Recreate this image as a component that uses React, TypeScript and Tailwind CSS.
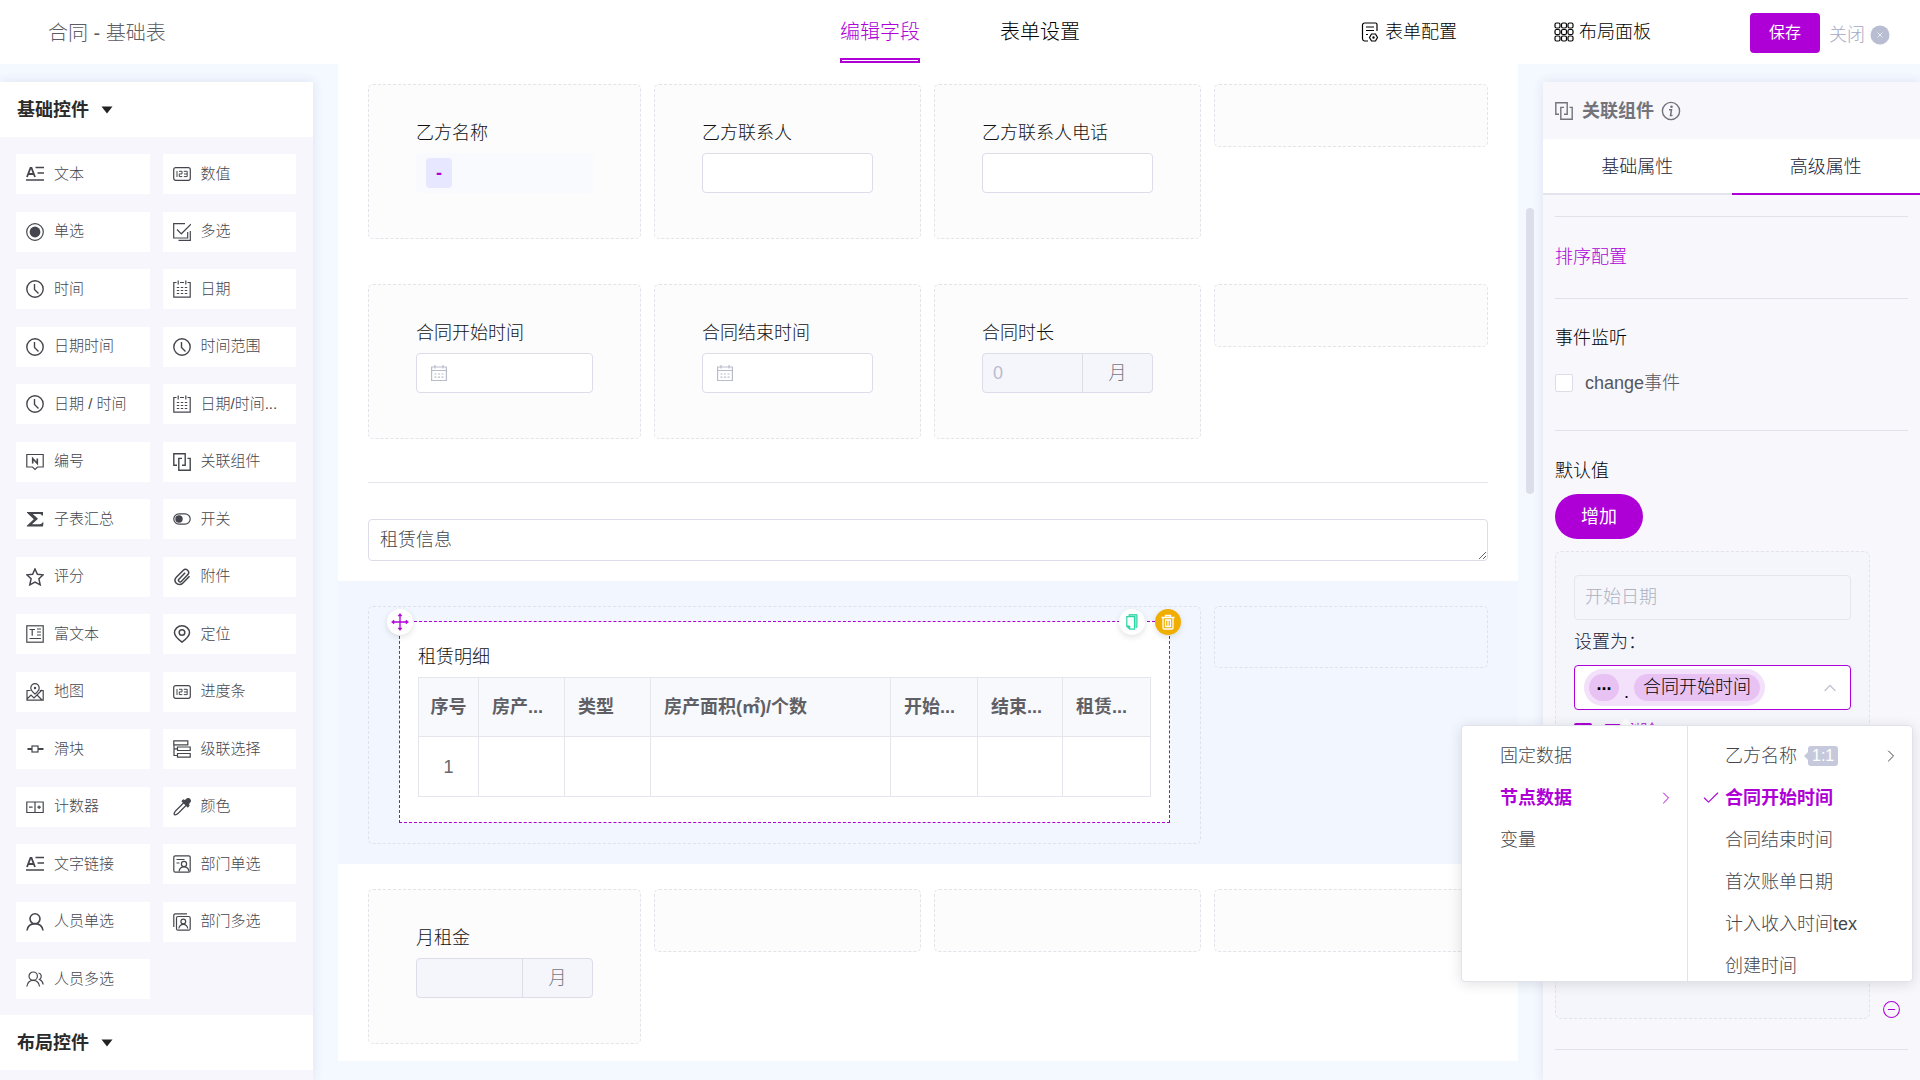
import * as React from "react";
import { Check, ChevronRight, ChevronUp, CircleMinus } from "lucide-react";

const icons: Record<string, React.ReactNode> = {
  text: (
    <>
      <path d="M1 12L4.5 3h1L9 12M2.5 9h5" strokeWidth="1.8" />
      <path d="M9.5 2.5H18M11.5 8H18M0 15h18" strokeWidth="1.5" />
    </>
  ),
  number: (
    <>
      <rect x="0.7" y="2.7" width="16.6" height="12.6" rx="2" />
      <path d="M4 6v6M6 6.3h3v2.6H6.3v2.7h3M10.8 6.3h3.4v5.3h-3.4M11 9h3" strokeWidth="1" />
    </>
  ),
  radio: (
    <>
      <circle cx="9" cy="9" r="8.3" />
      <circle cx="9" cy="9" r="5.4" fill="currentColor" stroke="none" />
    </>
  ),
  checkbox: (
    <>
      <path d="M12 0.7H0.7V15h14V9" />
      <path d="M4 6.5l4.3 4.3L18 1.2" />
      <path d="M17.3 8v9.3H5.5" />
    </>
  ),
  clock: (
    <>
      <circle cx="9" cy="9" r="8.2" strokeWidth="1.4" />
      <path d="M8.5 4v5.5l4 4" strokeWidth="1.4" />
    </>
  ),
  date: (
    <>
      <path d="M3.5 2.5H.8v14.7h16.4V2.5h-2.7M7 2.5h4M5.2 0.5v4M12.8 0.5v4" />
      <path d="M3.8 7.5h2.4M7.8 7.5h2.4M11.8 7.5h2.4M3.8 10.5h2.4M7.8 10.5h2.4M11.8 10.5h2.4M3.8 13.5h2.4M7.8 13.5h2.4M11.8 13.5h2.4" />
    </>
  ),
  serial: (
    <>
      <path d="M.8 1.5h16.4V14H11.5L9 16.5 6.5 14H.8z" />
      <path d="M6.7 10.5v-5l4.6 5v-5" strokeWidth="1.6" />
    </>
  ),
  relation: (
    <path d="M4 12.2H.8V.8h11.4v11.4H9M9 5.400H5.800v11.800h11.400V5.400H14.500" strokeWidth="1.400" />
  ),
  sum: (
    <path d="M1 2h16v3.500h-1.200c-.4-1-1-1.500-2.300-1.500H6.800L12 8.800 6 14.200h7.800c1.400 0 2-.6 2.500-1.700H17.500L17 16.500H.8v-.8L7.800 9.300 1 2.800z" fill="currentColor" stroke="none" />
  ),
  toggle: (
    <>
      <rect x="0.8" y="3.8" width="16.4" height="10.4" rx="5.2" />
      <circle cx="6" cy="9" r="3.7" fill="currentColor" stroke="none" />
    </>
  ),
  star: <path d="M9 1l2.4 5.2 5.8.6-4.3 4 1.3 6L9 14l-5.2 2.8 1.3-6-4.3-4 5.8-.6z" strokeWidth="1.5" />,
  clip: (
    <path
      d="M16.5 8.2l-6.8 7a4.4 4.4 0 0 1-6.6-.2 4.4 4.4 0 0 1 .2-5.8l7-7a3.2 3.2 0 0 1 4.6 4.4l-6.6 6.8a1.6 1.6 0 0 1-2.4-2.2l6.2-6.4"
      strokeWidth="1.5"
    />
  ),
  rich: (
    <>
      <rect x="0.8" y="0.8" width="16.4" height="16.4" />
      <path d="M3.5 4.5h5.5M6.2 4.5v6.2M11 4h4M11 7h4M11 10h4M3.5 13.5h11.5" />
    </>
  ),
  pin: (
    <>
      <path d="M9 17.2C5 14.2 1.5 11.5 1.5 7.8a7.5 7 0 0 1 15 0c0 3.700-3.500 6.400-7.500 9.400z" strokeWidth="1.5" />
      <circle cx="9" cy="7.5" r="2.8" strokeWidth="1.5" />
    </>
  ),
  map: (
    <>
      <path d="M4.500 7.500H1v9.700h16.200V7.500h-3.500M1 16l4-4 3 3 8-8M11 12l5 5" />
      <path d="M9 11C6.500 8.800 4.800 7 4.800 4.900a4.200 4.200 0 0 1 8.400 0C13.200 7 11.500 8.800 9 11z" />
      <circle cx="9" cy="5" r="1.200" fill="currentColor" stroke="none" />
    </>
  ),
  slider: (
    <>
      <rect x="6" y="6" width="6" height="6" />
      <path d="M1.500 9H6M12 9h5.500" strokeWidth="1.800" />
    </>
  ),
  cascade: (
    <path d="M.8.8h14v4H.8zM4.500 7h12.700v3.500H4.500zM4.500 13.500h12.700v3.700H4.500zM1 5v10.500h3.500M1 8.800h3.500" />
  ),
  counter: <path d="M.8 4h16.400v10.500H.8zM9 4v10.500M3 9.200h3.600M11.300 9.200h3.600M13.100 7.400V11" />,
  picker: (
    <>
      <path d="M11 4.500L2.500 13c-1 1-1.500 2.500-1.200 3.700 1.200.3 2.700-.2 3.700-1.200L13.500 7" />
      <path d="M9.200 3.200l1.200-1.200 1.600.8L14 .9a2.200 2.200 0 0 1 3 3L15.200 6l.8 1.500-1.200 1.300z" fill="currentColor" />
    </>
  ),
  deptOne: (
    <>
      <path d="M5 17.200H2.300A1.500 1.500 0 0 1 .8 15.700V2.300A1.500 1.500 0 0 1 2.300.8h13.400a1.500 1.500 0 0 1 1.500 1.500v13.400a1.500 1.500 0 0 1-1.500 1.500H5M3.500 4.500h8M3.500 8h3" />
      <circle cx="11" cy="9" r="2.600" />
      <path d="M6 16.500c.5-3 2.500-4.600 5-4.600s4.500 1.600 5 4.600" />
    </>
  ),
  deptMany: (
    <>
      <path d="M.8 14V2.300A1.500 1.500 0 0 1 2.300.8H14" />
      <rect x="3.500" y="3.500" width="13.700" height="13.700" rx="1.500" />
      <circle cx="10.300" cy="8.500" r="2.400" />
      <path d="M5.800 15.500c.5-2.700 2.300-4.200 4.500-4.200s4 1.500 4.500 4.200" />
    </>
  ),
  person: (
    <>
      <circle cx="9" cy="5.800" r="5" strokeWidth="1.600" />
      <path d="M1 17.500c.7-4.500 3.500-6.900 8-6.900s7.300 2.400 8 6.900" strokeWidth="1.600" />
    </>
  ),
  people: (
    <>
      <circle cx="7.200" cy="6.200" r="4.200" />
      <path d="M.8 16.500c.6-4 3-6.100 6.400-6.100s5.800 2.100 6.400 6.100M12.500 3c3 .5 4 4.500 1 6.500 2.200.9 3.300 2.500 3.700 5" />
    </>
  ),
};

interface IIconProps {
  name: string;
}

const Icon: React.FunctionComponent<IIconProps> = ({ name }) => (
  <svg
    viewBox="0 0 18 18"
    fill="none"
    stroke="currentColor"
    strokeWidth="1.2"
    className="w-[18px] h-[18px] shrink-0"
    aria-hidden="true"
  >
    {icons[name]}
  </svg>
);

const widgets = [
  { icon: "text", label: "文本" },
  { icon: "number", label: "数值" },
  { icon: "radio", label: "单选" },
  { icon: "checkbox", label: "多选" },
  { icon: "clock", label: "时间" },
  { icon: "date", label: "日期" },
  { icon: "clock", label: "日期时间" },
  { icon: "clock", label: "时间范围" },
  { icon: "clock", label: "日期 / 时间" },
  { icon: "date", label: "日期/时间..." },
  { icon: "serial", label: "编号" },
  { icon: "relation", label: "关联组件" },
  { icon: "sum", label: "子表汇总" },
  { icon: "toggle", label: "开关" },
  { icon: "star", label: "评分" },
  { icon: "clip", label: "附件" },
  { icon: "rich", label: "富文本" },
  { icon: "pin", label: "定位" },
  { icon: "map", label: "地图" },
  { icon: "number", label: "进度条" },
  { icon: "slider", label: "滑块" },
  { icon: "cascade", label: "级联选择" },
  { icon: "counter", label: "计数器" },
  { icon: "picker", label: "颜色" },
  { icon: "text", label: "文字链接" },
  { icon: "deptOne", label: "部门单选" },
  { icon: "person", label: "人员单选" },
  { icon: "deptMany", label: "部门多选" },
  { icon: "people", label: "人员多选" },
];

const Header = () => (
  <header className="grid grid-cols-[1fr_auto_1fr] h-16 shrink-0 bg-white">
    <h1 className="pl-12 pt-[18px] text-xl leading-[30px] text-[#5c5c64]">合同 - 基础表</h1>
    <nav className="flex gap-20 text-xl">
      <a href="#fields" className="flex flex-col pt-[17px] text-[#ae00d6]">
        <span className="leading-[30px]">编辑字段</span>
        <span className="mt-[11px] h-[5px] border-2 border-[#ae00d6]" />
      </a>
      <a href="#settings" className="pt-[17px] leading-[30px] text-black">
        表单设置
      </a>
    </nav>
    <div className="flex items-start justify-end pr-[30px] text-lg text-black">
      <button className="mt-4 mr-[97px] flex items-center gap-[6px] leading-8">
        <svg viewBox="0 0 18 20" fill="none" stroke="currentColor" strokeWidth="1.2" className="w-[18px] h-5">
          <path d="M7 19H3.500A2.500 2.500 0 0 1 1.500 17V3a2 2 0 0 1 2-2h11a1.500 1.500 0 0 1 1.500 1.500V9M5 5h8M5 8.500h8M5 12.500h2" />
          <path d="M10.500 12h4l2 3.500-2 3.500h-4l-2-3.500z" />
          <circle cx="12.500" cy="15.500" r="0.600" />
        </svg>
        表单配置
      </button>
      <button className="mt-4 mr-[99px] flex items-center gap-[5px] leading-8">
        <svg viewBox="0 0 20 20" fill="none" stroke="currentColor" strokeWidth="1.200" className="w-5 h-5">
          {[1, 7.500, 14].map((y) =>
            [1, 7.500, 14].map((x) => <rect key={`${x}-${y}`} x={x} y={y} width="5" height="5" rx="1.500" />)
          )}
        </svg>
        布局面板
      </button>
      <button className="mt-[13px] w-[70px] h-10 rounded bg-[#ae00d6] text-base font-normal text-white">保存</button>
      <button className="mt-[19px] ml-[9px] flex items-center gap-[5px] leading-8 text-[#a4a9c4]">
        关闭
        <svg viewBox="0 0 20 20" className="w-5 h-5">
          <circle cx="10" cy="10" r="9.500" fill="#b9bdd2" />
          <path d="M7.500 7.500l5 5M12.500 7.500l-5 5" stroke="#e8eaf4" strokeWidth="1" />
        </svg>
      </button>
    </div>
  </header>
);

const SectionTitle = ({ title }: { title: string }) => (
  <button className="flex items-center gap-3 h-[55px] w-full shrink-0 bg-white pl-[17px] text-lg font-bold text-[#2b2b2b]">
    {title}
    <svg viewBox="0 0 12 8" className="w-3 h-2" fill="#222">
      <path d="M0.500 0.500h11L6 7.500z" />
    </svg>
  </button>
);

const WidgetPanel = () => (
  <aside className="mt-[18px] mr-[25px] pb-[10px] w-[313px] shrink-0 flex flex-col bg-[#f6f6fc] shadow-[0_0_10px_rgba(60,70,130,0.12)]">
    <SectionTitle title="基础控件" />
    <div className="flex-1 grid grid-cols-2 gap-x-[13px] content-between pt-[17px] pb-4 pl-4 pr-[17px]">
      {widgets.map((item, index) => (
        <button
          key={index}
          className="flex items-center gap-[10px] h-10 pl-[10px] bg-white text-[15px] text-[#45464d] text-left whitespace-nowrap"
        >
          <Icon name={item.icon} />
          {item.label}
        </button>
      ))}
    </div>
    <SectionTitle title="布局控件" />
  </aside>
);

const rowClass =
  "grid grid-cols-[minmax(0,273fr)_minmax(0,267fr)_minmax(0,267fr)_minmax(0,274fr)] gap-x-[13px] items-start px-[30px]";

const Cell = ({ children }: { children: React.ReactNode }) => (
  <div className="h-[155px] rounded-[5px] border border-dashed border-[#e3e4ea] bg-[#fcfcfc] px-[47px] pt-7">
    {children}
  </div>
);

const EmptyCell = () => <div className="h-[63px] rounded-[5px] border border-dashed border-[#e3e4ea] bg-[#fcfcfc]" />;

const labelClass = "block text-lg leading-10 text-[#111]";
const inputClass = "block w-full h-10 rounded border border-[#dcdde8] bg-white px-[10px] text-lg";

const DateField = ({ id, label }: { id: string; label: string }) => (
  <Cell>
    <label htmlFor={id} className={labelClass}>
      {label}
    </label>
    <div className="flex items-center h-10 rounded border border-[#dcdde8] bg-white pl-[13px]">
      <svg viewBox="0 0 18 18" fill="none" stroke="#b9bccb" strokeWidth="1.200" className="w-[18px] h-[18px] shrink-0">
        <path d="M1.600 3h14.800v13.500H1.600zM1.600 6.500h14.800M5 1v3.500M13 1v3.500M4.500 10h2M8 10h2M11.500 10h2M4.500 13.200h2M8 13.200h2M11.500 13.200h2" />
      </svg>
      <input id={id} className="flex-1 min-w-0 h-full px-2 text-lg outline-none" />
    </div>
  </Cell>
);

const MonthField = ({ id, label, value }: { id: string; label: string; value: string }) => (
  <Cell>
    <label htmlFor={id} className={labelClass}>
      {label}
    </label>
    <div className="flex h-10 rounded border border-[#dcdde8] bg-[#f5f6fc] text-lg">
      <input id={id} disabled defaultValue={value} className="flex-1 min-w-0 px-[10px] text-[#b9bccb]" />
      <span className="w-[70px] border-l border-[#dcdde8] text-center leading-[38px] text-[#75777f]">月</span>
    </div>
  </Cell>
);

const columns = [
  { title: "序号", width: "w-[60px]" },
  { title: "房产...", width: "w-[86px]" },
  { title: "类型", width: "w-[86px]" },
  { title: "房产面积(㎡)/个数", width: "w-[240px]" },
  { title: "开始...", width: "w-[87px]" },
  { title: "结束...", width: "w-[85px]" },
  { title: "租赁...", width: "w-[88px]" },
];

const DetailTable = () => (
  <table className="w-full table-fixed border-collapse text-lg">
    <thead>
      <tr className="h-[59px] bg-[#f8f9fc]">
        {columns.map((col, index) => (
          <th
            key={col.title}
            className={`${col.width} border border-[#e5e6eb] font-bold text-[#5f6066] whitespace-nowrap ${
              index === 0 ? "text-center" : "pl-[13px] text-left"
            }`}
          >
            {col.title}
          </th>
        ))}
      </tr>
    </thead>
    <tbody>
      <tr className="h-[60px]">
        {columns.map((col, index) => (
          <td key={col.title} className="border border-[#e5e6eb] text-center text-[#66676d]">
            {index === 0 ? "1" : ""}
          </td>
        ))}
      </tr>
    </tbody>
  </table>
);

const roundButton = "absolute flex items-center justify-center w-[26px] h-[26px] rounded-full shadow-[0_2px_6px_rgba(0,0,0,0.12)]";

const SelectedBlock = () => (
  <div className="col-span-3 rounded-[5px] border border-dashed border-[#e0e2ea] px-[30px] pt-[14px] pb-5">
    <div className="relative border border-dashed border-[#ae00d6] bg-white px-[18px] pt-[15px] pb-[25px]">
      <h2 className={labelClass}>租赁明细</h2>
      <DetailTable />
      <button aria-label="移动" className={`${roundButton} -left-[13px] -top-[13px] bg-white text-[#ae00d6]`}>
        <svg viewBox="0 0 18 18" className="w-[18px] h-[18px]" stroke="currentColor" fill="currentColor">
          <path d="M9 2v14M2 9h14" strokeWidth="1.300" />
          <path d="M9 0.500l2 2.500H7zM9 17.500l2-2.500H7zM0.500 9L3 7v4zM17.500 9L15 7v4z" strokeWidth="0.500" />
        </svg>
      </button>
      <button aria-label="复制" className={`${roundButton} right-6 -top-[13px] bg-white text-[#2ad4a4]`}>
        <svg viewBox="0 0 12 16" className="w-3 h-4" stroke="currentColor" fill="none">
          <path d="M3 2V.7h8v12.600H9.500" fill="#8deacd" />
          <path d="M.8 2.700h7.700v12.500H3.800L.8 12.200z" fill="#fff" strokeWidth="1.200" />
          <path d="M.8 12h3v3z" fill="currentColor" />
        </svg>
      </button>
      <button aria-label="删除" className={`${roundButton} -right-3 -top-[13px] bg-[#f0ae00] text-white`}>
        <svg viewBox="0 0 14 16" className="w-[14px] h-4" stroke="currentColor" fill="none" strokeWidth="1.300">
          <path d="M.5 3.500h13M4.500 3.300V1.500h5v1.800M2 3.500v10.300a1.200 1.200 0 0 0 1.200 1.200h7.600a1.200 1.200 0 0 0 1.200-1.200V3.500M4.500 6h5v6.500h-5zM7 6v6.500" />
        </svg>
      </button>
    </div>
  </div>
);

const Canvas = () => (
  <main className="flex-1 min-w-0 overflow-hidden">
    <div className="bg-white pt-5">
      <div className={`${rowClass} pb-5`}>
        <Cell>
          <span className={labelClass}>乙方名称</span>
          <div className="h-10 rounded bg-[#f9fafd] pl-[10px] pt-[5px]">
            <span className="flex items-center justify-center w-[26px] h-[30px] rounded bg-[#e7e8ff] text-lg font-bold text-[#ae00d6]">
              -
            </span>
          </div>
        </Cell>
        <Cell>
          <label htmlFor="contact" className={labelClass}>
            乙方联系人
          </label>
          <input id="contact" className={inputClass} />
        </Cell>
        <Cell>
          <label htmlFor="phone" className={labelClass}>
            乙方联系人电话
          </label>
          <input id="phone" className={inputClass} />
        </Cell>
        <EmptyCell />
      </div>
      <div className={`${rowClass} pt-[25px] pb-5`}>
        <DateField id="start" label="合同开始时间" />
        <DateField id="end" label="合同结束时间" />
        <MonthField id="duration" label="合同时长" value="0" />
        <EmptyCell />
      </div>
      <div className="px-[30px] pt-[23px] pb-5">
        <hr className="border-[#e3e4e9]" />
        <textarea
          aria-label="租赁信息"
          defaultValue="租赁信息"
          className="block mt-9 w-full h-[42px] rounded border border-[#dcdde8] px-[11px] pt-[5px] text-lg leading-[30px] text-[#45464d]"
        />
      </div>
      <div className={`${rowClass} bg-[#f2f6ff] pt-[25px] pb-5`}>
        <SelectedBlock />
        <div className="h-[62px] rounded-[5px] border border-dashed border-[#e0e2ea]" />
      </div>
      <div className={`${rowClass} pt-[25px] pb-[17px]`}>
        <MonthField id="rent" label="月租金" value="" />
        <EmptyCell />
        <EmptyCell />
        <EmptyCell />
      </div>
    </div>
  </main>
);

const nodeFields = ["合同结束时间", "首次账单日期", "计入收入时间tex", "创建时间"];

const CascadeMenu = () => (
  <div className="absolute z-10 top-[60px] -right-[62px] w-[452px]">
    <span className="absolute left-[159px] -top-1 w-3 h-3 rotate-45 bg-white" />
    <div className="relative flex h-[257px] overflow-hidden rounded border border-[#e1e3ec] bg-white shadow-[0_2px_14px_rgba(0,0,0,0.12)] text-lg text-[#45464d]">
      <ul className="w-[226px] shrink-0 border-r border-[#e1e3ec] pt-[9px] leading-[42px]">
        <li className="pl-[38px]">固定数据</li>
        <li className="flex items-center justify-between pl-[38px] pr-[11px] font-bold text-[#ae00d6]">
          节点数据
          <ChevronRight className="w-5 h-5" strokeWidth={1.200} />
        </li>
        <li className="pl-[38px]">变量</li>
      </ul>
      <ul className="flex-1 pt-[9px] leading-[42px]">
        <li className="flex items-center pl-[37px] pr-[11px]">
          乙方名称
          <span className="ml-[7px] flex items-center">
            <span className="border-y-4 border-r-4 border-y-transparent border-r-[#c6c9dc]" />
            <span className="h-5 rounded-[3px] bg-[#c6c9dc] px-1 text-base leading-5 text-white">1:1</span>
          </span>
          <ChevronRight className="ml-auto w-5 h-5" strokeWidth={1.200} />
        </li>
        <li className="flex items-center gap-1 pl-[13px] font-bold text-[#ae00d6]">
          <Check className="w-5 h-5" strokeWidth={1.300} />
          合同开始时间
        </li>
        {nodeFields.map((field) => (
          <li key={field} className="pl-[37px]">
            {field}
          </li>
        ))}
      </ul>
    </div>
  </div>
);

const PropertyPanel = () => (
  <aside className="mt-[18px] w-[377px] shrink-0 bg-[#f7f7fc] text-lg shadow-[0_0_10px_rgba(60,70,130,0.12)]">
    <div className="flex items-center h-[57px] pl-3 text-[#73737a]">
      <Icon name="relation" />
      <h2 className="ml-[9px] font-bold">关联组件</h2>
      <svg viewBox="0 0 20 20" fill="none" stroke="currentColor" className="ml-[7px] w-5 h-5">
        <circle cx="10" cy="10" r="8.600" strokeWidth="1.400" />
        <circle cx="10.500" cy="5.700" r="1.300" fill="currentColor" stroke="none" />
        <path d="M8 8.800h2.500L9.500 14.500h2" strokeWidth="1.500" />
      </svg>
    </div>
    <div className="grid grid-cols-2 h-14 bg-white text-[#1b2338]">
      <button className="border-b-2 border-[#e4e4ee] pt-[2px]">基础属性</button>
      <button className="border-b-2 border-[#ae00d6] pt-[2px]">高级属性</button>
    </div>
    <div className="px-3 pt-[21px] text-black">
      <hr className="border-[#e1e2e9]" />
      <a href="#sort" className="block py-[25px] leading-[31px] text-[#ae00d6]">
        排序配置
      </a>
      <hr className="border-[#e1e2e9]" />
      <h3 className="pt-6 leading-[30px]">事件监听</h3>
      <label className="mt-[15px] mb-8 flex items-center gap-3 leading-[30px] text-[#55565c]">
        <input type="checkbox" className="appearance-none w-[18px] h-[18px] rounded-[2px] border border-[#dcdde8] bg-white" />
        change事件
      </label>
      <hr className="border-[#e1e2e9]" />
      <h3 className="pt-[25px] leading-[30px]">默认值</h3>
      <button className="mt-2 w-[88px] h-[45px] rounded-full bg-[#ae00d6] font-normal text-white">增加</button>
      <div className="mt-3 flex items-end">
        <div className="w-[315px] h-[468px] rounded-md border border-dashed border-[#e1e3ec] bg-[#f4f6fc] px-[18px] pt-[23px]">
          <input
            aria-label="字段"
            disabled
            placeholder="开始日期"
            className="block w-full h-[45px] rounded border border-[#e4e6ee] px-[10px] placeholder:text-[#aeb1c0]"
          />
          <p className="pt-[7px] pb-2 leading-[30px] text-[#1b2338]">设置为：</p>
          <div className="relative">
            <button
              aria-haspopup="listbox"
              className="flex items-center w-full h-[45px] rounded border border-[#ae00d6] bg-white pl-[9px] pr-[10px]"
            >
              <span className="flex items-center h-[37px] rounded-full bg-[#f3e0fa] px-[5px]">
                <span className="w-[30px] h-[27px] rounded-full bg-[#e8c2f3] text-center font-bold leading-5">...</span>
                <span className="w-[15px] pt-2 text-center">.</span>
                <span className="h-[27px] rounded-full bg-[#e8c2f3] px-[9px] leading-[27px]">合同开始时间</span>
              </span>
              <ChevronUp className="ml-auto w-5 h-5 text-[#c0c3cf]" strokeWidth={1.500} />
            </button>
            <label className="mt-[7px] flex items-center gap-3 leading-[30px] text-[#ae00d6]">
              <input
                type="checkbox"
                defaultChecked
                className="appearance-none w-[18px] h-[18px] rounded-[2px] bg-[#ae00d6]"
              />
              可删除
            </label>
            <CascadeMenu />
          </div>
        </div>
        <button aria-label="移除" className="ml-3 text-[#ae00d6]">
          <CircleMinus className="w-[19px] h-[19px]" strokeWidth={1.300} />
        </button>
      </div>
      <hr className="mt-[30px] border-[#e1e2e9]" />
    </div>
  </aside>
);

const App: React.FunctionComponent = () => {
  return (
    <div className="flex flex-col h-screen overflow-hidden bg-[#f4f8ff] font-light font-['Liberation_Sans','Noto_Sans_CJK_SC',sans-serif]">
      <Header />
      <div className="flex flex-1 min-h-0">
        <WidgetPanel />
        <Canvas />
        <div className="w-[25px] shrink-0 pl-2 pt-36">
          <div className="w-2 h-[286px] rounded-full bg-[#dcdfe9]" />
        </div>
        <PropertyPanel />
      </div>
    </div>
  );
};

export default App;
